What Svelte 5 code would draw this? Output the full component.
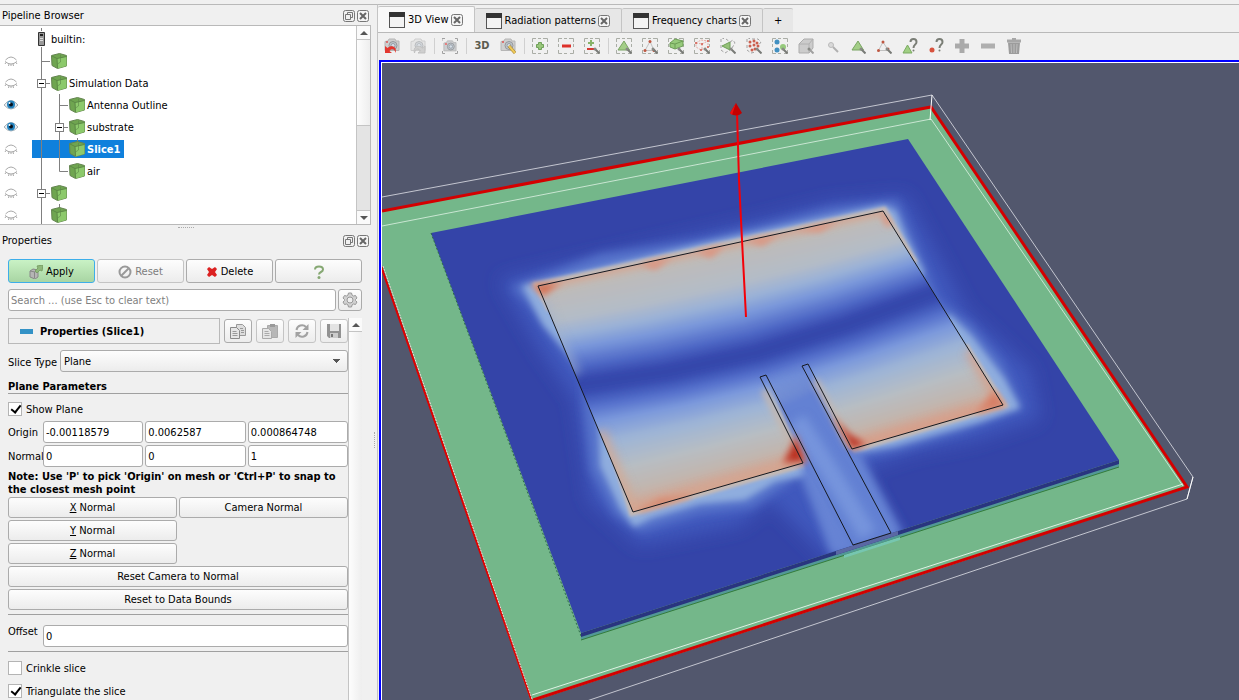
<script>
  let showPlane = $state(true);
  let crinkle = $state(false);
  let triangulate = $state(true);
  let search = $state('');
  let sliceType = $state('Plane');
  let offset = $state('0');
  let origin = $state(['-0.00118579', '0.0062587', '0.000864748']);
  let normal = $state(['0', '0', '1']);
  let activeTab = $state(0);
  let selected = $state(5);

  const tabs = ['3D View', 'Radiation patterns', 'Frequency charts'];

  // guides: v = line, t = branch, l = last branch, m = expander
  const rows = [
    { guides: [], label: 'builtin:', server: true },
    { guides: ['t'], label: '', visible: false },
    { guides: ['m'], label: 'Simulation Data', visible: false },
    { guides: ['v', 't'], label: 'Antenna Outline', visible: true },
    { guides: ['v', 'm'], label: 'substrate', visible: true },
    { guides: ['v', 'v'], label: 'Slice1', visible: false, stub: true },
    { guides: ['v', 'l'], label: 'air', visible: false },
    { guides: ['m'], label: '', visible: false },
    { guides: ['v'], label: '', visible: false, stub: true },
  ];

  const frame = '<path d="M.5 4V.5H4M6 .5h3M11 .5h4.500V4M15.500 6v3M15.500 12v3.500H12M9 15.500H6M4 15.500H.5V12M.5 9V6" fill="none" stroke="#a3a69f"/>';
  const lens = '<path d="M11.500 11.500l4 4" stroke="#6c6e6a" stroke-width="2"/><circle cx="11" cy="11" r="1.500" fill="#7d807b"/>';
  const triangle = '<path d="M2 12L8 3l5.500 9z" fill="#9bcb7c" stroke="#6c9c52"/>';
  const camera = (c) => `<path d="M1 3.500l3-.5 1-2h6l1 2h3v9.500H1z" fill="${c}" stroke="#b0b0b0"/><circle cx="9" cy="7.500" r="4" fill="#bcc2c8" stroke="#8b8f93"/><circle cx="9" cy="7.500" r="2" fill="#d3dde6" stroke="#8b959f"/>`;
  const dots = (list, c, r = 1) => list.map(([x, y]) => `<circle cx="${x}" cy="${y}" r="${r}" fill="${c}"/>`).join('');

  const icons = {
    undo: camera('#ccc') + '<circle cx="3" cy="4" r="1" fill="#d44"/><path d="M1 8v7h7l-2.500-2c2-3 5-3 6 2 2-6-4-9-8-5z" fill="#e2231b"/>',
    redo: '<g opacity=".6">' + camera('#ddd') + '</g><path d="M15 8v7H8l2.500-2c-2-3-5-3-6 2-2-6 4-9 8-5z" fill="#ccc" stroke="#bbb"/>',
    capture: '<path d="M0 3V.5h3M13 .5h2.500V3M15.500 13v2.500H13M3 15.500H.5V13" fill="none" stroke="#999"/><g transform="translate(1 2) scale(.87)">' + camera('#c9cbce') + '</g><circle cx="4" cy="6" r="1" fill="#e55"/>',
    zoomCam: camera('#ccc') + '<circle cx="3" cy="4" r="1" fill="#d44"/><path d="M9 8l6 7" stroke="#9b7419" stroke-width="3"/><path d="M9 8l6 7" stroke="#eec64b" stroke-width="2"/>',
    plus: frame + '<path d="M6.500 4.500h3v2h2v3h-2v2h-3v-2h-2v-3h2z" fill="#8fc36e" stroke="#62984a"/>',
    minus: frame + '<path d="M4 6.500h9v3H4z" fill="#dc1d15"/>',
    plusMinus: frame + '<path d="M6 2h2v2h2v2H8v2H6V6H4V4h2z" fill="#7cad5b"/><path d="M3 10h7v2H3z" fill="#d3271f"/>' + lens,
    cells: frame + triangle + lens,
    points: frame + '<path d="M8 3.500L3 12.500h9z" fill="none" stroke="#bbb"/>' + dots([[8, 3.500], [3, 12.500], [12, 12.500]], '#b9472f', 1.500) + lens,
    frustumCells: frame + '<path d="M2 5l5-4 8 2v5l-8 3-5-2z" fill="#8dc66f" stroke="#5f9546"/><path d="M2 5l5 1 8-3M7 6v5" fill="none" stroke="#5f9546"/>' + lens,
    frustumPoints: frame + '<path d="M2 5l5-3 7 1v6l-7 3-5-3zM2 5l6 1 6-3M8 6v6" fill="none" stroke="#e5a79f" stroke-dasharray="2 1"/>' + dots([[2, 5], [8, 6], [14, 3], [7, 12], [14, 9]], '#d04a3b') + lens,
    polyCells: '<path d="M1 4V.5h3M6 1l4 3 3-2 2 3-3 5M1 7v5l4 3 5-3" fill="none" stroke="#999" stroke-dasharray="3 2"/><path d="M2 8l8-4v8z" fill="#8cbd6c" stroke="#5f9546"/>' + lens,
    polyPoints: '<path d="M1 4V.5h3M6 1h6l3 3-3 4M1 7v5l4 3 5-1" fill="none" stroke="#999" stroke-dasharray="3 2"/>' + dots([[4, 4], [8, 3], [11, 5], [4, 8], [8, 7], [12, 8], [6, 12], [9, 11]], '#c9503d', 1.500) + lens,
    block: frame + dots([[5, 4], [5, 12]], '#2f86bd', 2.500) + dots([[11, 9]], '#8dc66f', 3) + lens,
    cube: '<path d="M1 6l5-5h9v9l-4 5H1z" fill="#c9c9c9" stroke="#a5a5a5"/><path d="M1 6h10v9M11 6l4-5" fill="none" stroke="#aaa"/>' + lens.replaceAll('#6c6e6a', '#999'),
    hover: '<circle cx="7" cy="7" r="2.500" fill="#d7d7d7" stroke="#b5b5b5"/><path d="M9 9l5 5" stroke="#aaa" stroke-width="2"/>',
    hoverCells: triangle + lens,
    hoverPoints: '<path d="M7 4L2.500 12.500h9" fill="none" stroke="#bbb"/><path d="M7 4l5 8" stroke="#bbb"/>' + dots([[7, 4], [2.500, 12.500], [12, 11]], '#b9472f', 1.500) + lens,
    askCells: '<path d="M1 15l4.500-8 4.500 8z" fill="#98cc78" stroke="#6ea352"/><path d="M8.500 4c0-4 6-4 6 0 0 3-3 2-3 6" fill="none" stroke="#6e7269" stroke-width="2"/><circle cx="11.500" cy="12.500" r="1" fill="#6e7269"/>',
    askPoints: '<circle cx="4" cy="12" r="2.500" fill="#d5412a"/><path d="M8.500 4c0-4 6-4 6 0 0 3-3 2-3 6" fill="none" stroke="#6e7269" stroke-width="2"/><circle cx="11.500" cy="12.500" r="1" fill="#6e7269"/>',
    grow: '<path d="M5.500 1h5v4.500H15v5h-4.500V15h-5v-4.500H1v-5h4.500z" fill="#a3a3a3"/>',
    shrink: '<path d="M1 5.500h14v5H1z" fill="#a9a9a9"/>',
    trash: '<path d="M2 4.500h12L13 16H3z" fill="#939393"/><path d="M1 1.500h14v3H1zM6 0h4v2H6z" fill="#a0a0a0"/><path d="M5 6l.5 9M8 6v9M11 6l-.5 9" stroke="#b9b9b9"/>',
    copy: '<path d="M6.500 1.500h6l3 3v8h-9z" fill="#ddd" stroke="#999"/><path d="M.5 4.500h6l3 3v8h-9z" fill="#e5e5e5" stroke="#8a8a8a"/><path d="M2.500 8.500h4M2.500 10.500h5M2.500 12.500h5M10 5.500h3M11 7.500h3M11 9.500h3" stroke="#999"/>',
    paste: '<path d="M5.500 2.500h10v12h-10z" fill="#b7b7b7" stroke="#aaa"/><path d="M8 1h5v3H8z" fill="#999"/><path d="M.5 5.500h6l3 3v7h-9z" fill="#e5e5e5" stroke="#aaa"/><path d="M2.500 8.500h4M2.500 10.500h5M2.500 12.500h5" stroke="#aaa"/>',
    refresh: '<path d="M2.500 7A5.500 5.500 0 0 1 12 4M13.500 9A5.500 5.500 0 0 1 4 12" fill="none" stroke="#a2a2a2" stroke-width="2"/><path d="M14.500 1v6h-6zM1.500 15V9h6z" fill="#a2a2a2"/>',
    save: '<path d="M1 1h14v14H3l-2-2z" fill="#929292"/><path d="M4 1h9v7H4z" fill="#e3e3e3"/><path d="M4 10h8v5H4z" fill="#ccc"/><path d="M5 11h2v3H5z" fill="#777"/>',
  };

  const tools = [
    ['undo', 'Undo camera'], ['redo', 'Redo camera'], null,
    ['capture', 'Capture screenshot'], null,
    ['3D', 'Toggle 3D interaction'], ['zoomCam', 'Adjust camera'], null,
    ['plus', 'Add selection'], ['minus', 'Subtract selection'], ['plusMinus', 'Toggle selection'], null,
    ['cells', 'Select cells on'], ['points', 'Select points on'],
    ['frustumCells', 'Select cells through'], ['frustumPoints', 'Select points through'],
    ['polyCells', 'Select cells with polygon'], ['polyPoints', 'Select points with polygon'],
    ['block', 'Select block'], ['cube', 'Interactive select'], ['hover', 'Hover'],
    ['hoverCells', 'Interactive cells'], ['hoverPoints', 'Interactive points'],
    ['askCells', 'Hover cells'], ['askPoints', 'Hover points'],
    ['grow', 'Grow selection'], ['shrink', 'Shrink selection'], ['trash', 'Clear selection'],
  ];

  // curves across the patch: radiating edge, null line, feed edge
  const topCurve = [[538, 286], [624, 267], [711, 248], [797, 230], [883, 211]];
  const midCurve = [[579, 386], [668, 373], [757, 354], [846, 326], [935, 293]];
  const bottomCurve = [[633, 512], [726, 485], [818, 458], [911, 431], [1003, 405]];

  const upperScale = [[0, 198, 182, 172], [0.12, 188, 187, 187], [0.35, 180, 188, 199], [0.5, 154, 177, 215], [0.64, 120, 150, 218], [0.8, 82, 108, 200], [0.93, 55, 74, 174], [1, 53, 70, 170]];
  const lowerScale = [[0, 53, 70, 170], [0.05, 56, 76, 176], [0.16, 83, 110, 203], [0.28, 121, 151, 219], [0.45, 158, 180, 214], [0.66, 183, 189, 195], [0.85, 194, 182, 174], [1, 214, 160, 140]];

  function colourAt(scale, t) {
    let i = 1;
    while (i < scale.length - 1 && scale[i][0] < t) i++;
    const a = scale[i - 1];
    const b = scale[i];
    const k = (t - a[0]) / (b[0] - a[0]);
    return `rgb(${[1, 2, 3].map((n) => Math.round(a[n] + (b[n] - a[n]) * k)).join(',')})`;
  }

  function curveAt(from, to, t) {
    const pts = from.map(([x, y], i) => [x + (to[i][0] - x) * t, y + (to[i][1] - y) * t]);
    // run past both ends so the clip does the trimming
    const [first, last] = [pts[0], pts[4]];
    return [[first[0] - 40, first[1] + 8], ...pts, [last[0] + 40, last[1] - 10]];
  }

  function makeStrips(from, to, scale) {
    const n = 40;
    return Array.from({ length: n }, (_, i) => {
      const a = curveAt(from, to, i / n);
      const b = curveAt(from, to, (i + 1.6) / n).reverse();
      return { points: [...a, ...b].join(' '), fill: colourAt(scale, (i + 0.5) / n) };
    });
  }

  const strips = [...makeStrips(topCurve, midCurve, upperScale), ...makeStrips(midCurve, bottomCurve, lowerScale)];

  const patch = '538,286 883,211 1003,405 852,449 808,364 802,366 891,533 853,545 766,375 760,377 803,463 633,512';
</script>

{#snippet icon(name)}
  <svg width="16" height="16" viewBox="0 0 16 16" aria-hidden="true">{@html icons[name]}</svg>
{/snippet}

{#snippet closeIcon()}
  <svg width="12" height="12" viewBox="0 0 12 12" aria-hidden="true">
    <rect x=".5" y=".5" width="11" height="11" rx="2" fill="#f4f4f4" stroke="#777" />
    <path d="M3 3l6 6M9 3l-6 6" stroke="#666" stroke-width="2" />
  </svg>
{/snippet}

{#snippet dockTitle(title)}
  <header class="dock-title">
    <h2>{title}</h2>
    <button class="mini" aria-label="Float {title}">
      <svg width="12" height="12" viewBox="0 0 12 12" aria-hidden="true">
        <rect x=".5" y=".5" width="11" height="11" rx="2" fill="none" stroke="#777" />
        <path d="M4.500 4V2.500h5v5H8M2.500 4.500h5v5h-5z" fill="none" stroke="#777" />
      </svg>
    </button>
    <button class="mini" aria-label="Close {title}">{@render closeIcon()}</button>
  </header>
{/snippet}

{#snippet cube(stub)}
  <svg class="cell" width="18" height="22" viewBox="0 0 18 22" aria-hidden="true">
    {#if stub}<path d="M9.500 0v4" stroke="#808080" />{/if}
    <path d="M1.500 5.500l8-2 7 2v10.500l-9 2.500-5.500-3z" fill="#6fa550" stroke="#648450" />
    <path d="M7 8.500l9.500-2V16l-9 2.500z" fill="#8cc96b" />
    <path d="M2 6l5 2.500 9.500-2M7 8.500l.5 9.500" fill="none" stroke="#5c8946" />
    <path d="M10.500 5v7l-3 2" fill="none" stroke="#5c8946" opacity=".6" />
  </svg>
{/snippet}

{#snippet guide(kind)}
  <svg class="cell" width="18" height="22" viewBox="0 0 18 22" aria-hidden="true">
    <path d={kind === 'l' ? 'M9.500 0v11.500H18' : kind === 't' || kind === 'm' ? 'M9.500 0v22M9.500 11.500H18' : 'M9.500 0v22'} fill="none" stroke="#808080" />
    {#if kind === 'm'}
      <rect x="5.500" y="7.500" width="8" height="8" fill="#fff" stroke="#808080" />
      <path d="M7 11.500h5" stroke="#000" />
    {/if}
  </svg>
{/snippet}

<main>
  <aside>
    {@render dockTitle('Pipeline Browser')}
    <div class="tree-box">
      <ul class="tree">
        {#each rows as row, i}
          <li>
            <span class="eye">
              {#if row.visible}
                <svg width="14" height="12" viewBox="0 0 14 12" aria-hidden="true">
                  <path d="M0 6q7-9 14 0-7 8-14 0z" fill="#e9eef2" stroke="#a7b0b6" />
                  <circle cx="7" cy="5.500" r="4" fill="#2382bd" />
                  <circle cx="7" cy="5.500" r="2" fill="#06101a" />
                  <circle cx="5.500" cy="4" r="1" fill="#fff" />
                </svg>
              {:else if !row.server}
                <svg width="14" height="12" viewBox="0 0 14 12" aria-hidden="true">
                  <path d="M1.500 5q5.500-6 11 0M1 6.500q6 5 12 0M2 7.500L1 9M5 9l-.5 2M9 9l.5 2M12 7.500L13 9M7 9v2" fill="none" stroke="#a9a9a9" />
                </svg>
              {/if}
            </span>
            <button class="item" class:selected={selected === i} aria-label={row.label || 'source'} onclick={() => (selected = i)}>
              {#each row.guides as kind}{@render guide(kind)}{/each}
              {#if row.server}
                <svg class="cell" width="18" height="22" viewBox="0 0 18 22" aria-hidden="true">
                  <path d="M9.500 0v3M9.500 19v3" stroke="#808080" />
                  <path d="M6.500 4.500h6v13h-6z" fill="#999" stroke="#333" />
                  <path d="M8 6h3v2H8z" fill="#222" /><path d="M8 10.500h3M8 12.500h3" stroke="#ddd" />
                </svg>
              {:else}
                {@render cube(row.stub)}
              {/if}
              <span>{row.label}</span>
            </button>
          </li>
        {/each}
      </ul>
      <div class="scroll">
        <button class="arrow" aria-label="Scroll up"><i class="up"></i></button>
        <div class="thumb"></div>
        <div class="track"></div>
        <button class="arrow bottom" aria-label="Scroll down"><i class="down"></i></button>
      </div>
    </div>
    <div class="splitter"></div>

    {@render dockTitle('Properties')}
    <div class="actions">
      <button class="btn apply">
        <svg width="14" height="14" viewBox="0 0 14 14" aria-hidden="true">
          <path d="M1 6l3-2 5 1v7l-3 2-5-2z" fill="#b5b5b5" stroke="#888" /><path d="M1 6l5 1 3-2M5.500 7v6" fill="none" stroke="#888" />
          <path d="M6 6l3-3-1-2 6-1-1 6-2-1-3 3z" fill="#8fb97b" stroke="#7aa066" />
        </svg>
        Apply
      </button>
      <button class="btn" disabled>
        <svg width="14" height="14" viewBox="0 0 14 14" aria-hidden="true"><circle cx="7" cy="7" r="5.500" fill="none" stroke="#999" stroke-width="2" /><path d="M3.500 10.500l7-7" stroke="#999" stroke-width="2" /></svg>
        Reset
      </button>
      <button class="btn">
        <svg width="12" height="12" viewBox="0 0 12 12" aria-hidden="true"><path d="M1 3l2-2 3 2 3-2 2 2-2 3 2 3-2 2-3-2-3 2-2-2 2-3z" fill="#dc2222" /></svg>
        Delete
      </button>
      <button class="btn" aria-label="Help">
        <svg width="12" height="14" viewBox="0 0 12 14" aria-hidden="true"><path d="M2 4.500c0-4 8-4 8 0 0 3-4 2-4 5" fill="none" stroke="#86a873" stroke-width="2" /><circle cx="6" cy="12.500" r="1.500" fill="#86a873" /></svg>
      </button>
    </div>
    <div class="search">
      <input type="text" bind:value={search} placeholder="Search ... (use Esc to clear text)" aria-label="Search properties">
      <button class="btn gear" aria-label="Advanced properties">
        <svg width="16" height="16" viewBox="0 0 16 16" aria-hidden="true">
          <path d="M6.500 1h3l.5 2 1.500 1 2-.5 1.500 2.500-1.500 1.500v1L15 10l-1.500 2.500-2-.5-1.500 1-.5 2h-3L6 13l-1.500-1-2 .5L1 10l1.500-1.500v-1L1 6l1.500-2.500 2 .5L6 3z" fill="#d0d0d0" stroke="#999" />
          <circle cx="8" cy="8" r="3" fill="#eee" stroke="#999" />
        </svg>
      </button>
    </div>

    <div class="props">
      <div class="fields">
        <div class="section">
          <h3><i></i>Properties (Slice1)</h3>
          <button class="btn square" aria-label="Copy">{@render icon('copy')}</button>
          <button class="btn square" disabled aria-label="Paste">{@render icon('paste')}</button>
          <button class="btn square" disabled aria-label="Restore defaults">{@render icon('refresh')}</button>
          <button class="btn square" disabled aria-label="Save defaults">{@render icon('save')}</button>
        </div>
        <div class="slice-type">
          <label for="slice-type">Slice Type</label>
          <select id="slice-type" bind:value={sliceType}>
            <option>Plane</option>
            <option>Box</option>
            <option>Sphere</option>
            <option>Cylinder</option>
          </select>
        </div>
        <h4>Plane Parameters</h4>
        <label class="check"><input type="checkbox" bind:checked={showPlane}>Show Plane</label>
        <div class="vector">
          <label for="origin-0">Origin</label>
          {#each origin as _, i}
            <input id="origin-{i}" type="text" aria-label="Origin {i}" bind:value={origin[i]}>
          {/each}
        </div>
        <div class="vector">
          <label for="normal-0">Normal</label>
          {#each normal as _, i}
            <input id="normal-{i}" type="text" aria-label="Normal {i}" bind:value={normal[i]}>
          {/each}
        </div>
        <p>Note: Use 'P' to pick 'Origin' on mesh or 'Ctrl+P' to snap to the closest mesh point</p>
        <div class="normals">
          <button class="btn"><span><u>X</u> Normal</span></button>
          <button class="btn">Camera Normal</button>
          <button class="btn first"><span><u>Y</u> Normal</span></button>
          <button class="btn first"><span><u>Z</u> Normal</span></button>
          <button class="btn wide">Reset Camera to Normal</button>
          <button class="btn wide">Reset to Data Bounds</button>
        </div>
        <div class="offset">
          <label for="offset">Offset</label>
          <input id="offset" type="text" bind:value={offset}>
        </div>
        <label class="check"><input type="checkbox" bind:checked={crinkle}>Crinkle slice</label>
        <label class="check"><input type="checkbox" bind:checked={triangulate}>Triangulate the slice</label>
      </div>
      <div class="scroll">
        <button class="arrow" aria-label="Scroll properties up"><i class="up"></i></button>
        <div class="thumb full"></div>
      </div>
    </div>
  </aside>
  <div class="grip"><i></i></div>

  <section>
    <nav>
      {#each tabs as tab, i}
        <div class="tab" class:active={activeTab === i}>
          <button class="name" onclick={() => (activeTab = i)}>
            <svg width="16" height="16" viewBox="0 0 16 16" aria-hidden="true">
              <rect x=".5" y=".5" width="15" height="15" fill="#f3f3f3" stroke="#555" />
              <path d="M0 0h16v5H0z" fill="#333" />
            </svg>
            {tab}
          </button>
          <button class="mini" aria-label="Close {tab}">{@render closeIcon()}</button>
        </div>
      {/each}
      <button class="tab add" aria-label="New layout">+</button>
    </nav>
    <div class="toolbar">
      {#each tools as tool}
        {#if tool}
          <button class="tool" aria-label={tool[1]}>
            {#if tool[0] === '3D'}<b>3D</b>{:else}{@render icon(tool[0])}{/if}
          </button>
        {:else}
          <span class="sep"></span>
        {/if}
      {/each}
    </div>
    <div class="view">
      <svg viewBox="382 63 857 637" preserveAspectRatio="xMinYMin slice" aria-label="Surface field on antenna">
        <defs>
          <clipPath id="board"><path d="M431 233L908 139L1119 462L581 634z" /></clipPath>
          <clipPath id="patch"><polygon points="538,286 883,211 1003,405 633,512" /></clipPath>
          <linearGradient id="feed" gradientUnits="userSpaceOnUse" x1="780" y1="368" x2="796" y2="402">
            <stop offset="0" stop-color="#5a78cf" stop-opacity="0" />
            <stop offset="1" stop-color="#6481d3" />
          </linearGradient>
          <filter id="b1" x="-20%" y="-20%" width="140%" height="140%"><feGaussianBlur stdDeviation="1.5" /></filter>
          <filter id="b3" x="-50%" y="-50%" width="200%" height="200%"><feGaussianBlur stdDeviation="3" /></filter>
          <filter id="b5" x="-50%" y="-50%" width="200%" height="200%"><feGaussianBlur stdDeviation="5" /></filter>
          <filter id="b9" x="-50%" y="-50%" width="200%" height="200%"><feGaussianBlur stdDeviation="9" /></filter>
        </defs>

        <!-- air box -->
        <path d="M382 211L931 107L1187 488L531 702L382 265z" fill="#74b78a" />
        <path d="M382 197L932 95L1193 477L1187 499L560 710" fill="none" stroke="#c4c6d0" />
        <path d="M382 211L931 107L1187 487L533 700" fill="none" stroke="#d40000" stroke-width="3" />
        <path d="M381 266L532 702" fill="none" stroke="#e00000" stroke-width="2" />
        <path d="M383 266L533 702" fill="none" stroke="#f3d5d5" stroke-dasharray="2 1" />
        <path d="M382 226L931 119L1183 486" fill="none" stroke="#c9e6d2" />
        <path d="M532 695L1183 484" fill="none" stroke="#dff2e4" />
        <path d="M932 95L930 120M1193 477L1187 499" stroke="#fff" stroke-width="1" />

        <!-- substrate -->
        <path d="M581 634L1119 462V467L581 640z" fill="#529897" />
        <path d="M581 640L1119 467" stroke="#347c3a" />
        <path d="M431 233L908 139L1119 460L581 633z" fill="#3444a8" />
        <path d="M431 233L581 636" stroke="#2e6a4a" stroke-dasharray="2 2" />

        <g clip-path="url(#board)">
          <g filter="url(#b9)" fill="#4159bd">
            <path d="M500 280L620 252L740 225L830 203L905 196L945 270L965 310L1030 370L1040 418L975 440L915 452L860 470L905 550L830 560L770 500L740 525L640 545L590 500L575 400L540 350z" />
          </g>
          <g filter="url(#b5)" fill="#5673cb">
            <path d="M511 287L540 276L600 254L700 240L760 226L830 208L897 200L914 240L932 285L938 300L972 325L1002 362L1023 408L960 432L900 450L856 458L900 545L838 557L800 476L752 508L700 514L640 532L614 514L590 470L584 410L583 378L556 343L530 305z" />
          </g>
          <g filter="url(#b3)" fill="#8fadde">
            <path d="M522 286L700 244L884 205L896 211L906 236L924 272L915 290L600 365L579 366L543 325z" />
            <path d="M598 406L950 315L972 336L1004 378L1020 408L980 422L930 436L895 446L854 453L820 440L806 475L775 482L745 500L700 504L652 518L634 527L620 508L600 466z" />
          </g>
          <g filter="url(#b1)" fill="none" stroke="#c5b9b4" stroke-width="6">
            <path d="M550 310L537 285L884 210L915 263" />
            <path d="M612 450L632 513L805 464M852 450L1004 405L965 345" />
          </g>
          <path d="M800 466L858 450L903 534L832 556z" fill="#6683d4" filter="url(#b5)" />
        </g>

        <g clip-path="url(#patch)">
          <g filter="url(#b1)">
            {#each strips as strip}
              <polygon points={strip.points} fill={strip.fill} />
            {/each}
          </g>
          <path d="M540 300L552 330L575 375" fill="none" stroke="#a2b1cc" stroke-width="14" opacity=".5" filter="url(#b5)" />
          <path d="M600 432L633 512L803 463" fill="none" stroke="#d4a792" stroke-width="12" opacity=".8" filter="url(#b5)" />
          <path d="M855 449L1003 405L970 350" fill="none" stroke="#d79f89" stroke-width="12" opacity=".8" filter="url(#b5)" />
          <path d="M538 286L883 211L892 226" fill="none" stroke="#d2a897" stroke-width="7" filter="url(#b3)" />
        </g>

        <g clip-path="url(#board)">
          <!-- inset feed -->
          <path d="M764 372L806 362L851 450L894 534L850 550L803 463z" fill="url(#feed)" filter="url(#b1)" />
          <path d="M797 420L826 465L868 535" fill="none" stroke="#7c9adf" stroke-width="18" opacity=".8" filter="url(#b5)" />
          <path d="M764 390L801 460" fill="none" stroke="#c6b7ae" stroke-width="6" filter="url(#b3)" />
          <path d="M815 380L850 446" fill="none" stroke="#c6b7ae" stroke-width="6" filter="url(#b3)" />

          <!-- hot spots -->
          <g filter="url(#b3)">
            <path d="M783 463L796 436L806 462z" fill="#bb3024" stroke="#d07863" stroke-width="2" />
            <path d="M834 418L852 449L866 444L850 434z" fill="#bb3024" stroke="#d07863" stroke-width="2" />
            <path d="M980 411L994 393L1003 405z" fill="#d67a62" stroke="#d8886f" stroke-width="4" />
            <path d="M532 285L560 283L543 296z" fill="#d36f53" stroke="#d98f78" stroke-width="2" />
            <path d="M639 511L660 500L690 496z" fill="#d77d63" stroke="#d78c73" stroke-width="3" />
            <path d="M640 264L655 270L672 257zM695 252L711 258L725 245zM745 241L762 246L780 234zM795 231L820 232L838 221zM880 212L886 226L892 222z" fill="#dc9480" />
          </g>
        </g>

        <path d="M581 633L1119 460V464L581 637z" fill="#29357f" />
        <path d="M836 551L898 531V535L836 555z" fill="#5a68a4" />
        <path d="M844 555L900 537V540L844 558z" fill="#76c6b0" />
        <polygon points={patch} fill="none" stroke="#15181f" stroke-width="1" />

        <path d="M737 112L739 180L742 240L746 317" fill="none" stroke="#f40008" stroke-width="2" />
        <path d="M736 103L742 113Q736 118 730 113z" fill="#c40000" />
        <path d="M736 103L732 115L730 113z" fill="#ee1010" />
      </svg>
    </div>
  </section>
</main>

<style>
  :global(body) {
    margin: 0;
    background: #f0f0f0;
  }

  main {
    display: flex;
    height: 100vh;
    overflow: hidden;
    box-sizing: border-box;
    padding-top: 4px;
    background: #f0f0f0;
    color: #000;
    font-family: "DejaVu Sans Condensed", Tahoma, "Noto Sans", sans-serif;
    font-size: 11px;
    line-height: 13px;
  }

  main * {
    box-sizing: border-box;
  }

  button, input, select {
    margin: 0;
    font: inherit;
    color: inherit;
  }

  button {
    padding: 0;
    border: none;
    background: none;
  }

  svg {
    flex: none;
    display: block;
  }

  aside {
    flex: none;
    width: 371px;
    display: flex;
    flex-direction: column;
    border-top: 1px solid #b9b9b9;
  }

  .grip {
    display: flex;
    align-items: center;
    justify-content: center;
    flex: none;
    width: 7px;
    padding-top: 175px;
    border-top: 1px solid #b9b9b9;
    border-right: 1px solid #c4c4c4;
  }

  .grip i {
    height: 16px;
    border-left: 1px dotted #aaa;
  }

  .dock-title {
    display: flex;
    align-items: center;
    gap: 2px;
    height: 20px;
    padding: 1px 2px 0;
  }

  h2 {
    flex: 1;
    margin: 0;
    font-size: 11px;
    font-weight: normal;
  }

  .tree-box {
    display: flex;
    flex: none;
    height: 200px;
    border: 1px solid #b9b9b9;
    border-left: none;
    background: #fff;
  }

  .tree {
    flex: 1;
    margin: 0;
    padding: 2px 0 0;
    overflow: hidden;
    list-style: none;
  }

  li {
    display: flex;
    height: 22px;
  }

  .eye {
    display: flex;
    align-items: center;
    width: 32px;
    padding-left: 4px;
  }

  .item {
    display: flex;
    align-items: center;
  }

  .item span {
    padding: 0 4px 0 1px;
  }

  .item.selected {
    background: linear-gradient(#0f80dc, #0f80dc) center / 100% 18px no-repeat;
    color: #fff;
    font-weight: bold;
  }

  .scroll {
    display: flex;
    flex-direction: column;
    flex: none;
    width: 14px;
    border-left: 1px solid #c4c4c4;
    background: #e4e4e4;
  }

  .arrow {
    display: flex;
    align-items: center;
    justify-content: center;
    height: 14px;
    background: #fafafa;
    border-bottom: 1px solid #c4c4c4;
  }

  .arrow.bottom {
    border-top: 1px solid #c4c4c4;
    border-bottom: none;
  }

  .up, .down {
    border: 4px solid transparent;
    border-top: none;
    border-bottom: 4px solid #555;
  }

  .down {
    border-top: 4px solid #555;
    border-bottom: none;
  }

  .thumb {
    height: 86px;
    border-bottom: 1px solid #c4c4c4;
    background: linear-gradient(to right, #fdfdfd, #eee);
  }

  .thumb.full {
    flex: 1;
    border-bottom: none;
  }

  .track {
    flex: 1;
  }

  .splitter {
    flex: none;
    align-self: center;
    width: 16px;
    height: 3px;
    margin-bottom: 2px;
    border-bottom: 1px dotted #aaa;
  }

  .actions {
    display: flex;
    gap: 2px;
    padding: 9px 9px 0 8px;
  }

  .btn {
    display: flex;
    align-items: center;
    justify-content: center;
    gap: 3px;
    height: 21px;
    border: 1px solid #ababab;
    border-radius: 3px;
    background: linear-gradient(#fdfdfd, #ececec);
  }

  .btn:disabled {
    color: #7d7d7d;
    border-color: #c4c4c4;
  }

  .actions .btn {
    flex: 1;
    height: 24px;
    padding-top: 1px;
  }

  .actions .apply {
    border-color: #3daee9;
    background: linear-gradient(#c9f2c5, #a8d5a3);
  }

  input[type="text"] {
    min-width: 0;
    height: 22px;
    padding: 1px 2px 0;
    border: 1px solid #ababab;
    border-radius: 3px;
    outline: none;
    background: #fff;
  }

  input::placeholder {
    color: #7f7f7f;
    opacity: 1;
  }

  .search {
    display: flex;
    gap: 2px;
    padding: 6px 9px 0 8px;
  }

  .search input {
    flex: 1;
  }

  .gear {
    width: 24px;
    height: 22px;
  }

  .props {
    flex: 1;
    display: flex;
    min-height: 0;
    margin: 7px 9px 0 8px;
    overflow: hidden;
  }

  .fields {
    flex: 1;
    min-width: 0;
  }

  .section {
    display: flex;
    align-items: center;
    gap: 4px;
  }

  h3 {
    display: flex;
    flex: 1;
    align-items: center;
    gap: 7px;
    height: 26px;
    margin: 0;
    padding-left: 11px;
    border: 1px solid #b9b9b9;
    font-size: 11px;
  }

  h3 i {
    width: 13px;
    height: 5px;
    background: #3392c6;
  }

  .square {
    width: 28px;
    height: 24px;
  }

  .slice-type {
    display: flex;
    align-items: center;
    gap: 4px;
    margin-top: 6px;
  }

  .slice-type label {
    flex: none;
    padding-top: 2px;
    width: 48px;
    white-space: nowrap;
  }

  select {
    flex: 1;
    height: 22px;
    padding: 1px 3px 0;
    appearance: none;
    border: 1px solid #ababab;
    border-radius: 3px;
    background:
      linear-gradient(to bottom right, #555 50%, transparent 50%) right 6px center / 4px 4px no-repeat,
      linear-gradient(to bottom left, #555 50%, transparent 50%) right 10px center / 4px 4px no-repeat,
      linear-gradient(#fdfdfd, #ececec);
  }

  h4 {
    margin: 8px 0 0;
    border-bottom: 1px solid #a0a0a0;
    font-size: 11px;
  }

  .check {
    display: flex;
    align-items: center;
    gap: 4px;
    height: 14px;
    margin-top: 9px;
  }

  h4 + .check {
    margin-top: 8px;
  }

  .check input {
    width: 14px;
    height: 14px;
    appearance: none;
    border: 1px solid #b4b4b4;
    background: #fff;
  }

  .check input:checked::after {
    content: "";
    display: block;
    width: 4px;
    height: 8px;
    margin: 0 0 0 4px;
    border: solid #000;
    border-width: 0 2px 2px 0;
    transform: rotate(38deg);
  }

  .vector {
    display: grid;
    grid-template-columns: 33px 1fr 1fr 1fr;
    column-gap: 2px;
    align-items: center;
    margin-top: 2px;
  }

  .check + .vector {
    margin-top: 5px;
  }

  p {
    margin: 3px 0 1px;
    font-weight: bold;
  }

  .normals {
    display: grid;
    grid-template-columns: 1fr 1fr;
    gap: 2px;
    padding-bottom: 4px;
    border-bottom: 1px solid #a0a0a0;
  }

  .first {
    grid-column: 1;
  }

  .wide {
    grid-column: 1 / 3;
  }

  .offset {
    display: flex;
    gap: 2px;
    padding: 10px 0 4px;
    border-bottom: 1px solid #a0a0a0;
  }

  .offset label {
    width: 33px;
  }

  .offset input {
    flex: 1;
  }

  section {
    flex: 1;
    display: flex;
    flex-direction: column;
    min-width: 0;
    border-top: 1px solid #b9b9b9;
  }

  nav {
    display: flex;
    align-items: flex-end;
    height: 28px;
    padding-top: 2px;
    border-bottom: 1px solid #b9b9b9;
  }

  .tab {
    display: flex;
    align-items: center;
    gap: 2px;
    height: 24px;
    padding: 0 11px;
    border: 1px solid #c4c4c4;
    border-left: none;
    border-bottom: none;
    border-radius: 2px 2px 0 0;
    background: #e7e7e7;
  }

  .tab.active {
    height: 26px;
    background: #f8f8f8;
  }

  .add {
    border-right: none;
  }

  .name {
    display: flex;
    align-items: center;
    gap: 3px;
  }

  .toolbar {
    display: flex;
    align-items: center;
    flex: none;
    height: 27px;
    padding: 0 0 2px 1px;
    overflow: hidden;
  }

  .tool {
    display: flex;
    align-items: center;
    justify-content: center;
    flex: none;
    width: 26px;
    height: 24px;
  }

  .tool svg {
    opacity: 0.9;
  }

  .tool b {
    color: #5b5c50;
  }

  .sep {
    width: 6px;
    height: 16px;
    background: linear-gradient(#d0d0d0, #d0d0d0) center / 1px 100% no-repeat;
  }

  .view {
    flex: 1;
    min-height: 0;
    margin-left: 1px;
    border: 2px solid #00f;
    border-width: 2px 0 0 2px;
    padding: 1px 0 0 1px;
    background: #fff;
  }

  .view svg {
    width: 100%;
    height: 100%;
    background: #52576d;
  }
</style>
